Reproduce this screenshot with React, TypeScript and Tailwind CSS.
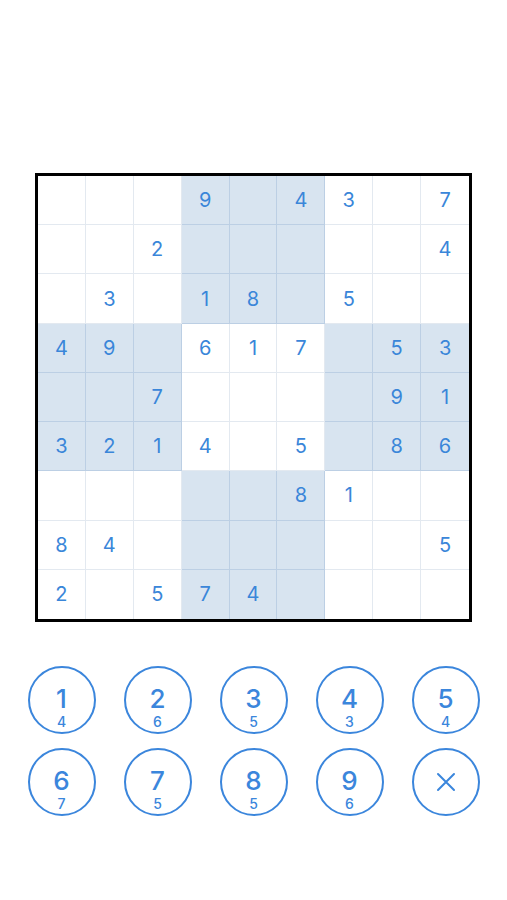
import React from "react";

/**
 * Sudoku board - 9×9 grid with alternating shaded 3×3 boxes
 * Grid: 437×449 outer, 3px black frame
 * Keypad: 5 columns of 68px circles, remaining count under each digit
 */

const BOARD: (number | null)[][] = [
  [null, null, null, 9, null, 4, 3, null, 7],
  [null, null, 2, null, null, null, null, null, 4],
  [null, 3, null, 1, 8, null, 5, null, null],
  [4, 9, null, 6, 1, 7, null, 5, 3],
  [null, null, 7, null, null, null, null, 9, 1],
  [3, 2, 1, 4, null, 5, null, 8, 6],
  [null, null, null, null, null, 8, 1, null, null],
  [8, 4, null, null, null, null, null, null, 5],
  [2, null, 5, 7, 4, null, null, null, null],
];

const KEYS = [
  { n: 1, left: 4 },
  { n: 2, left: 6 },
  { n: 3, left: 5 },
  { n: 4, left: 3 },
  { n: 5, left: 4 },
  { n: 6, left: 7 },
  { n: 7, left: 5 },
  { n: 8, left: 5 },
  { n: 9, left: 6 },
];

function Cell({ value, r, c }: { value: number | null; r: number; c: number }) {
  const shaded = (Math.floor(r / 3) + Math.floor(c / 3)) % 2 === 1;
  const lastCol = c === 8;
  const lastRow = r === 8;
  return (
    <div
      className={[
        "flex items-center justify-center text-[20px] text-[#3a86d9]",
        shaded ? "bg-[#d8e4f0] border-[#bccfe4]" : "bg-white border-[#e3e9f0]",
        lastCol ? "" : "border-r",
        lastRow ? "" : "border-b",
      ].join(" ")}
    >
      {value ?? ""}
    </div>
  );
}

function Key({ n, left }: { n: number; left: number }) {
  return (
    <button className="w-[68px] h-[68px] rounded-full border-2 border-[#3b86dc] flex flex-col items-center pt-[19px] text-[#3b86dc] font-medium">
      <span className="text-[26px] leading-[24px]">{n}</span>
      <span className="text-[14px] leading-[14px] mt-[4px]">{left}</span>
    </button>
  );
}

export default function App() {
  return (
    <div className="min-h-screen w-full bg-white flex flex-col items-center pt-[173px] font-['Inter',sans-serif]">
      {/* Board - 3px frame */}
      <div className="w-[437px] h-[449px] border-[3px] border-black grid grid-cols-9 grid-rows-9">
        {BOARD.map((row, r) =>
          row.map((v, c) => <Cell key={`${r}-${c}`} value={v} r={r} c={c} />)
        )}
      </div>

      {/* Keypad */}
      <div className="mt-[44px] grid grid-cols-5 gap-x-[28px] gap-y-[14px]">
        {KEYS.map((k) => (
          <Key key={k.n} n={k.n} left={k.left} />
        ))}
        <button className="w-[68px] h-[68px] rounded-full border-2 border-[#3b86dc] flex items-center justify-center">
          <svg width="22" height="22" viewBox="0 0 22 22" fill="none" stroke="#3b86dc" strokeWidth="2" strokeLinecap="round">
            <path d="M3 3 L19 19 M19 3 L3 19" />
          </svg>
        </button>
      </div>
    </div>
  );
}
